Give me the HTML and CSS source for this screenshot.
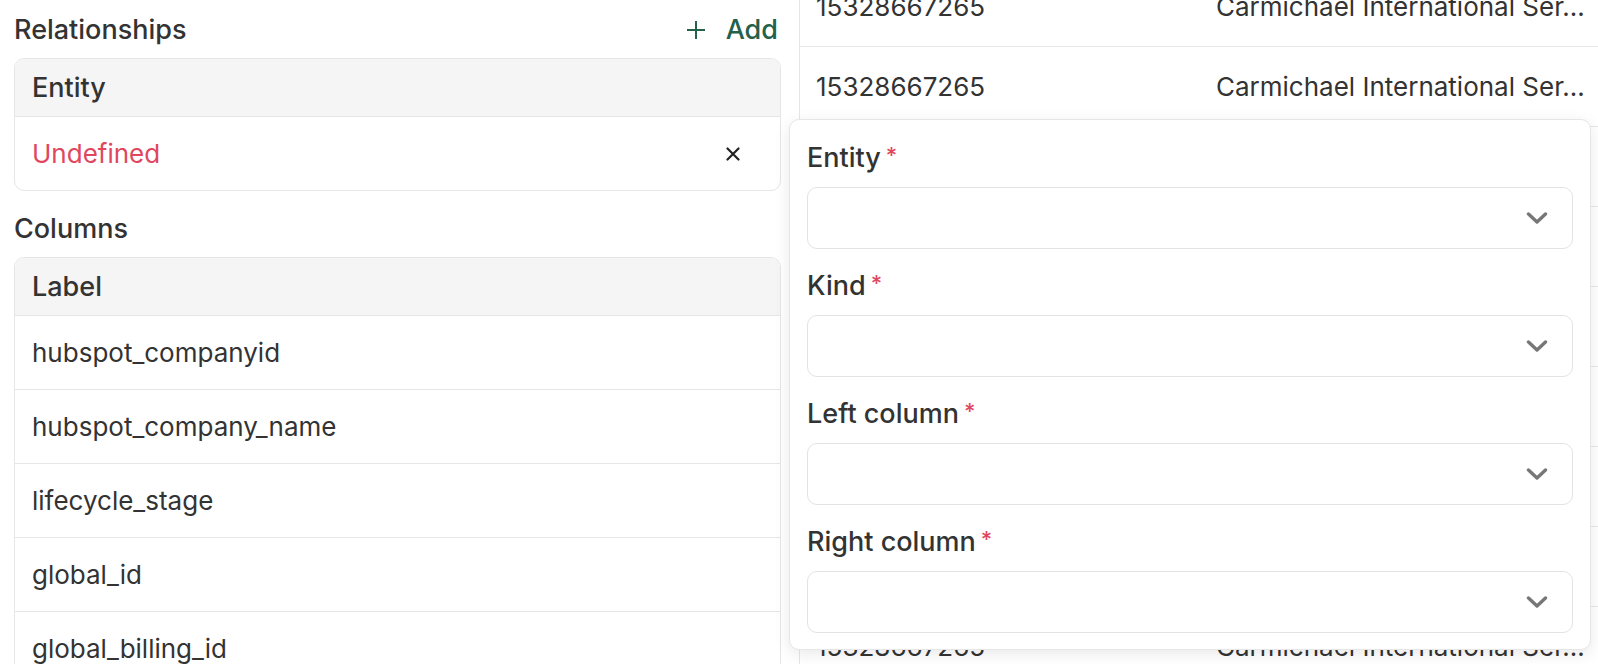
FILE: index.html
```html
<!DOCTYPE html>
<html lang="en">
<head>
<meta charset="utf-8">
<title>Relationships</title>
<link rel="stylesheet" href="styles.css">
</head>
<body>
<div class="page">
  <aside class="editor">
    <div class="section-head">
      <h2 class="section-title">Relationships</h2>
      <button class="add-btn" type="button">
        <svg class="add-icon" width="20" height="20" viewBox="0 0 20 20"><path d="M10 1v18M1 10h18" stroke="currentColor" stroke-width="2" fill="none"/></svg>
        <span>Add</span>
      </button>
    </div>
    <div class="card">
      <div class="card-head">Entity</div>
      <div class="card-row">
        <span class="undef">Undefined</span>
        <button class="remove" type="button" aria-label="Remove">
          <svg width="14" height="14" viewBox="0 0 14 14"><path d="M1.5 1.5l11 11M12.5 1.5l-11 11" stroke="#222" stroke-width="2.2" fill="none" stroke-linecap="round"/></svg>
        </button>
      </div>
    </div>
    <h2 class="section-title cols-title">Columns</h2>
    <div class="card">
      <div class="card-head">Label</div>
      <div class="card-row">hubspot_companyid</div>
      <div class="card-row">hubspot_company_name</div>
      <div class="card-row">lifecycle_stage</div>
      <div class="card-row">global_id</div>
      <div class="card-row">global_billing_id</div>
    </div>
  </aside>
  <main class="data">
    <div class="data-rows">
      <div class="data-row"><span>15328667265</span><span>Carmichael International Ser...</span></div>
      <div class="data-row"><span>15328667265</span><span>Carmichael International Ser...</span></div>
      <div class="data-row"><span>15328667265</span><span>Carmichael International Ser...</span></div>
      <div class="data-row"><span>15328667265</span><span>Carmichael International Ser...</span></div>
      <div class="data-row"><span>15328667265</span><span>Carmichael International Ser...</span></div>
      <div class="data-row"><span>15328667265</span><span>Carmichael International Ser...</span></div>
      <div class="data-row"><span>15328667265</span><span>Carmichael International Ser...</span></div>
      <div class="data-row"><span>15328667265</span><span>Carmichael International Ser...</span></div>
      <div class="data-row"><span>15328667265</span><span>Carmichael International Ser...</span></div>
      <div class="data-row"><span>15328667265</span><span>Carmichael International Ser...</span></div>
    </div>
  </main>
  <div class="popover">
    <div class="field">
      <label class="field-label">Entity<span class="req">*</span></label>
      <div class="select"><svg class="chev" width="22" height="12" viewBox="0 0 22 12"><path d="M2.5 2l8.5 8 8.5-8" stroke="#777" stroke-width="3.4" fill="none" stroke-linecap="round" stroke-linejoin="round"/></svg></div>
    </div>
    <div class="field">
      <label class="field-label">Kind<span class="req">*</span></label>
      <div class="select"><svg class="chev" width="22" height="12" viewBox="0 0 22 12"><path d="M2.5 2l8.5 8 8.5-8" stroke="#777" stroke-width="3.4" fill="none" stroke-linecap="round" stroke-linejoin="round"/></svg></div>
    </div>
    <div class="field">
      <label class="field-label">Left column<span class="req">*</span></label>
      <div class="select"><svg class="chev" width="22" height="12" viewBox="0 0 22 12"><path d="M2.5 2l8.5 8 8.5-8" stroke="#777" stroke-width="3.4" fill="none" stroke-linecap="round" stroke-linejoin="round"/></svg></div>
    </div>
    <div class="field">
      <label class="field-label">Right column<span class="req">*</span></label>
      <div class="select"><svg class="chev" width="22" height="12" viewBox="0 0 22 12"><path d="M2.5 2l8.5 8 8.5-8" stroke="#777" stroke-width="3.4" fill="none" stroke-linecap="round" stroke-linejoin="round"/></svg></div>
    </div>
  </div>
</div>
</body>
</html>
```

FILE: styles.css
```css
* { box-sizing: border-box; }
html, body {
  margin: 0;
  padding: 0;
  background: #fff;
  overflow: hidden;
}
body {
  font-family: Inter, "Noto Sans", sans-serif;
  font-size: 26px;
  color: #333;
  width: 1598px;
  height: 664px;
}
.page {
  position: relative;
  display: flex;
  height: 664px;
  overflow: hidden;
}
.editor {
  width: 799px;
  flex: none;
  padding: 12px 18px 0 14px;
}
.section-head {
  display: flex;
  align-items: center;
  justify-content: space-between;
  height: 36px;
  margin-bottom: 10px;
}
.section-title {
  margin: 0;
  font-size: 27px;
  font-weight: 550;
  line-height: 36px;
  color: #333;
}
.cols-title {
  margin: 20px 0 10px;
}
.add-btn {
  display: flex;
  align-items: center;
  gap: 20px;
  border: 0;
  background: none;
  padding: 0 3px 0 0;
  font: inherit;
  font-size: 27px;
  font-weight: 550;
  color: #24614a;
  line-height: 36px;
}
.add-icon { display: block; }
.card {
  border: 1px solid #e6e6e6;
  border-radius: 10px;
  overflow: hidden;
}
.card-head {
  height: 58px;
  background: #f5f5f5;
  border-bottom: 1px solid #e6e6e6;
  padding-left: 17px;
  display: flex;
  align-items: center;
  font-size: 27px;
  font-weight: 550;
}
.card-row {
  height: 74px;
  display: flex;
  align-items: center;
  justify-content: space-between;
  padding: 0 40px 0 17px;
  border-bottom: 1px solid #e6e6e6;
}
.card-row:last-child { border-bottom: 0; height: 73px; }
.undef { color: #e0475f; }
.remove {
  border: 0;
  background: none;
  padding: 0;
  display: flex;
}
.data {
  flex: 1;
  border-left: 1px solid #e6e6e6;
  overflow: hidden;
}
.data-rows {
  margin-top: -33px;
}
.data-row {
  display: grid;
  grid-template-columns: 400px 1fr;
  height: 80px;
  align-items: center;
  border-bottom: 1px solid #e6e6e6;
}
.data-row span {
  padding-left: 16px;
  white-space: nowrap;
}
.popover {
  position: absolute;
  left: 789px;
  top: 119px;
  width: 802px;
  height: 531px;
  background: #fff;
  border: 1px solid #e6e6e6;
  border-radius: 10px;
  box-shadow: 0 4px 16px rgba(0, 0, 0, 0.09);
  padding: 20px 17px 0 17px;
  display: flex;
  flex-direction: column;
  gap: 19px;
}
.field {
  display: flex;
  flex-direction: column;
  gap: 11px;
}
.field-label {
  font-size: 27px;
  font-weight: 550;
  line-height: 36px;
  height: 36px;
  display: flex;
  align-items: flex-start;
}
.req {
  color: #e0475f;
  font-size: 22px;
  line-height: 30px;
  margin-left: 5px;
}
.select {
  height: 62px;
  border: 1px solid #e3e3e3;
  border-radius: 10px;
  display: flex;
  align-items: center;
  justify-content: flex-end;
  padding-right: 24px;
}
.chev { display: block; }
```
